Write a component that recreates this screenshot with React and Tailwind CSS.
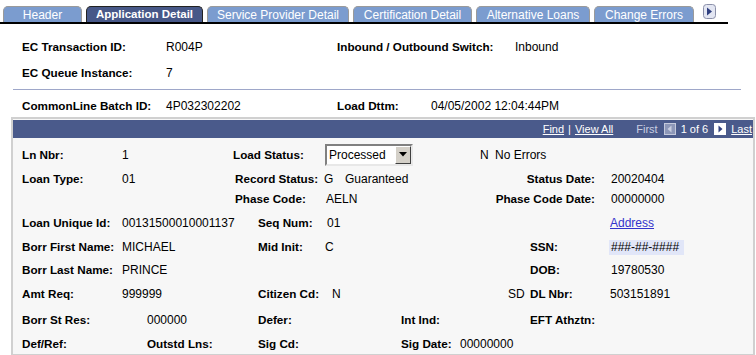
const tabs = [
  { name: 'Header', w: 'w-[79px]' },
  { name: 'Application Detail', w: 'w-[117px]', active: true },
  { name: 'Service Provider Detail', w: 'w-[142px]' },
  { name: 'Certification Detail', w: 'w-[119px]' },
  { name: 'Alternative Loans', w: 'w-[114px]' },
  { name: 'Change Errors', w: 'w-[100px]' },
]

const L = ({ className = '', children }) => (
  <span className={`shrink-0 font-bold text-[11.7px] text-black ${className}`}>{children}</span>
)

const V = ({ className = '', children }) => (
  <span className={`shrink-0 text-[12px] text-black ${className}`}>{children}</span>
)

const Tab = ({ tab }) => (
  <div
    className={
      tab.active
        ? `${tab.w} h-[16px] flex items-center justify-center rounded-t-[5px] border border-b-0 border-[#222] bg-[#475888] text-white font-bold text-[11.5px]`
        : `${tab.w} h-[16px] flex items-center justify-center rounded-t-[5px] border border-b-0 border-[#9a9a9a] bg-[#7b9ccf] text-white text-[12px]`
    }
  >
    {tab.name}
  </div>
)

const TabArrow = () => (
  <svg width="13" height="15" viewBox="0 0 13 15" className="ml-[5px] mb-[3px]">
    <rect x="0.5" y="0.5" width="12" height="14" rx="3" fill="#e3e6f2" stroke="#8a8fa8" />
    <path d="M4 3.5 L9 7.5 L4 11.5 Z" fill="#2f3f7f" />
  </svg>
)

const NavBox = ({ dir, disabled }) => (
  <svg width="12" height="12" viewBox="0 0 12 12">
    <rect x="0.5" y="0.5" width="11" height="11" fill={disabled ? '#8d97b8' : '#ffffff'} stroke={disabled ? '#c4c9dc' : '#ffffff'} />
    {dir === 'left' ? (
      <path d="M7.5 2.5 L3.5 6 L7.5 9.5 Z" fill={disabled ? '#c8cde0' : '#2f3f7f'} />
    ) : (
      <path d="M4.5 2.5 L8.5 6 L4.5 9.5 Z" fill="#2f3f7f" />
    )}
  </svg>
)

const SelectBox = () => (
  <div className="shrink-0 w-[88px] h-[22px] flex items-center bg-white border-2 border-t-[#808080] border-l-[#808080] border-b-[#e8e8e8] border-r-[#e8e8e8]">
    <span className="flex-1 pl-[2px] text-[12px] text-black">Processed</span>
    <span className="w-[16px] h-[18px] flex items-center justify-center bg-[#d4d0c8] border border-t-white border-l-white border-b-[#404040] border-r-[#404040]">
      <svg width="8" height="5" viewBox="0 0 8 5">
        <path d="M0 0 L8 0 L4 4.5 Z" fill="#000" />
      </svg>
    </span>
  </div>
)

const Row = ({ h, children }) => (
  <div className={`flex items-center pl-[9px] ${h}`}>{children}</div>
)

export default function App() {
  return (
    <div className="w-[756px] h-[355px] bg-white font-['Liberation_Sans',Arial,sans-serif] overflow-hidden">
      {/* tab strip */}
      <div className="w-[728px] flex items-end gap-[4px] pt-[4px] pl-[3px] border-b-2 border-black">
        {tabs.map((t) => (
          <Tab key={t.name} tab={t} />
        ))}
        <TabArrow />
      </div>

      {/* header fields */}
      <div className="pl-[22px] mt-[11px]">
        <div className="flex items-center h-[24px]">
          <L className="w-[144px]">EC Transaction ID:</L>
          <V className="w-[171px]">R004P</V>
          <L className="w-[178px]">Inbound / Outbound Switch:</L>
          <V>Inbound</V>
        </div>
        <div className="flex items-center h-[24px] mt-[2px]">
          <L className="w-[144px]">EC Queue Instance:</L>
          <V>7</V>
        </div>
      </div>
      <div className="ml-[13px] mt-[4px] w-[728px] h-[1px] bg-[#9ea7c9]" />
      <div className="pl-[22px] mt-[5px] flex items-center h-[22px]">
        <L className="w-[144px]">CommonLine Batch ID:</L>
        <V className="w-[171px]">4P032302202</V>
        <L className="w-[94px]">Load Dttm:</L>
        <V>04/05/2002 12:04:44PM</V>
      </div>

      {/* loan panel */}
      <div className="ml-[11px] w-[744px] h-[239px] border-2 border-[#d0d0d0] bg-[#f7f7f7]">
        <div className="mt-[1px] h-[18px] bg-[#4a5a8b] flex items-center text-[11px] text-white">
          <span className="ml-auto underline">Find</span>
          <span className="mx-[4px]">|</span>
          <span className="underline">View All</span>
          <span className="ml-[23px] text-[#c9cfe2]">First</span>
          <span className="ml-[6px] flex"><NavBox dir="left" disabled /></span>
          <span className="ml-[5px]">1 of 6</span>
          <span className="ml-[6px] flex"><NavBox dir="right" /></span>
          <span className="ml-[5px] mr-[1px] underline">Last</span>
        </div>

        <Row h="h-[33px]">
          <L className="w-[100px]">Ln Nbr:</L>
          <V className="w-[111px]">1</V>
          <L className="w-[92px]">Load Status:</L>
          <SelectBox />
          <V className="ml-[67px] w-[15px]">N</V>
          <V>No Errors</V>
        </Row>
        <Row h="h-[16px]">
          <L className="w-[100px]">Loan Type:</L>
          <V className="w-[113px]">01</V>
          <L className="w-[89px]">Record Status:</L>
          <V className="w-[21px]">G</V>
          <V className="w-[150px]">Guaranteed</V>
          <L className="w-[100px] text-right">Status Date:</L>
          <V className="ml-[16px]">20020404</V>
        </Row>
        <Row h="h-[24px]">
          <span className="w-[213px] shrink-0" />
          <L className="w-[91px]">Phase Code:</L>
          <V className="w-[140px]">AELN</V>
          <L className="w-[129px] text-right">Phase Code Date:</L>
          <V className="ml-[16px]">00000000</V>
        </Row>
        <Row h="h-[24px]">
          <L className="w-[100px]">Loan Unique Id:</L>
          <V className="w-[136px]">00131500010001137</V>
          <L className="w-[69px]">Seq Num:</L>
          <V className="w-[283px]">01</V>
          <span className="text-[12px] text-[#3333cc] underline">Address</span>
        </Row>
        <Row h="h-[24px]">
          <L className="w-[100px]">Borr First Name:</L>
          <V className="w-[136px]">MICHAEL</V>
          <L className="w-[67px]">Mid Init:</L>
          <V className="w-[205px]">C</V>
          <L className="w-[79px]">SSN:</L>
          <V className="w-[75px] h-[15px] leading-[15px] px-[2px] bg-[#e1e6f8]">###-##-####</V>
        </Row>
        <Row h="h-[22px]">
          <L className="w-[100px]">Borr Last Name:</L>
          <V className="w-[408px]">PRINCE</V>
          <L className="w-[81px]">DOB:</L>
          <V>19780530</V>
        </Row>
        <Row h="h-[26px]">
          <L className="w-[100px]">Amt Req:</L>
          <V className="w-[136px]">999999</V>
          <L className="w-[74px]">Citizen Cd:</L>
          <V className="w-[176px]">N</V>
          <V className="w-[22px]">SD</V>
          <L className="w-[80px]">DL Nbr:</L>
          <V>503151891</V>
        </Row>
        <Row h="h-[26px]">
          <L className="w-[125px]">Borr St Res:</L>
          <V className="w-[111px]">000000</V>
          <L className="w-[143px]">Defer:</L>
          <L className="w-[129px]">Int Ind:</L>
          <L>EFT Athztn:</L>
        </Row>
        <Row h="h-[21px]">
          <L className="w-[125px]">Def/Ref:</L>
          <L className="w-[111px]">Outstd Lns:</L>
          <L className="w-[143px]">Sig Cd:</L>
          <L className="w-[59px]">Sig Date:</L>
          <V>00000000</V>
        </Row>
      </div>
    </div>
  )
}
